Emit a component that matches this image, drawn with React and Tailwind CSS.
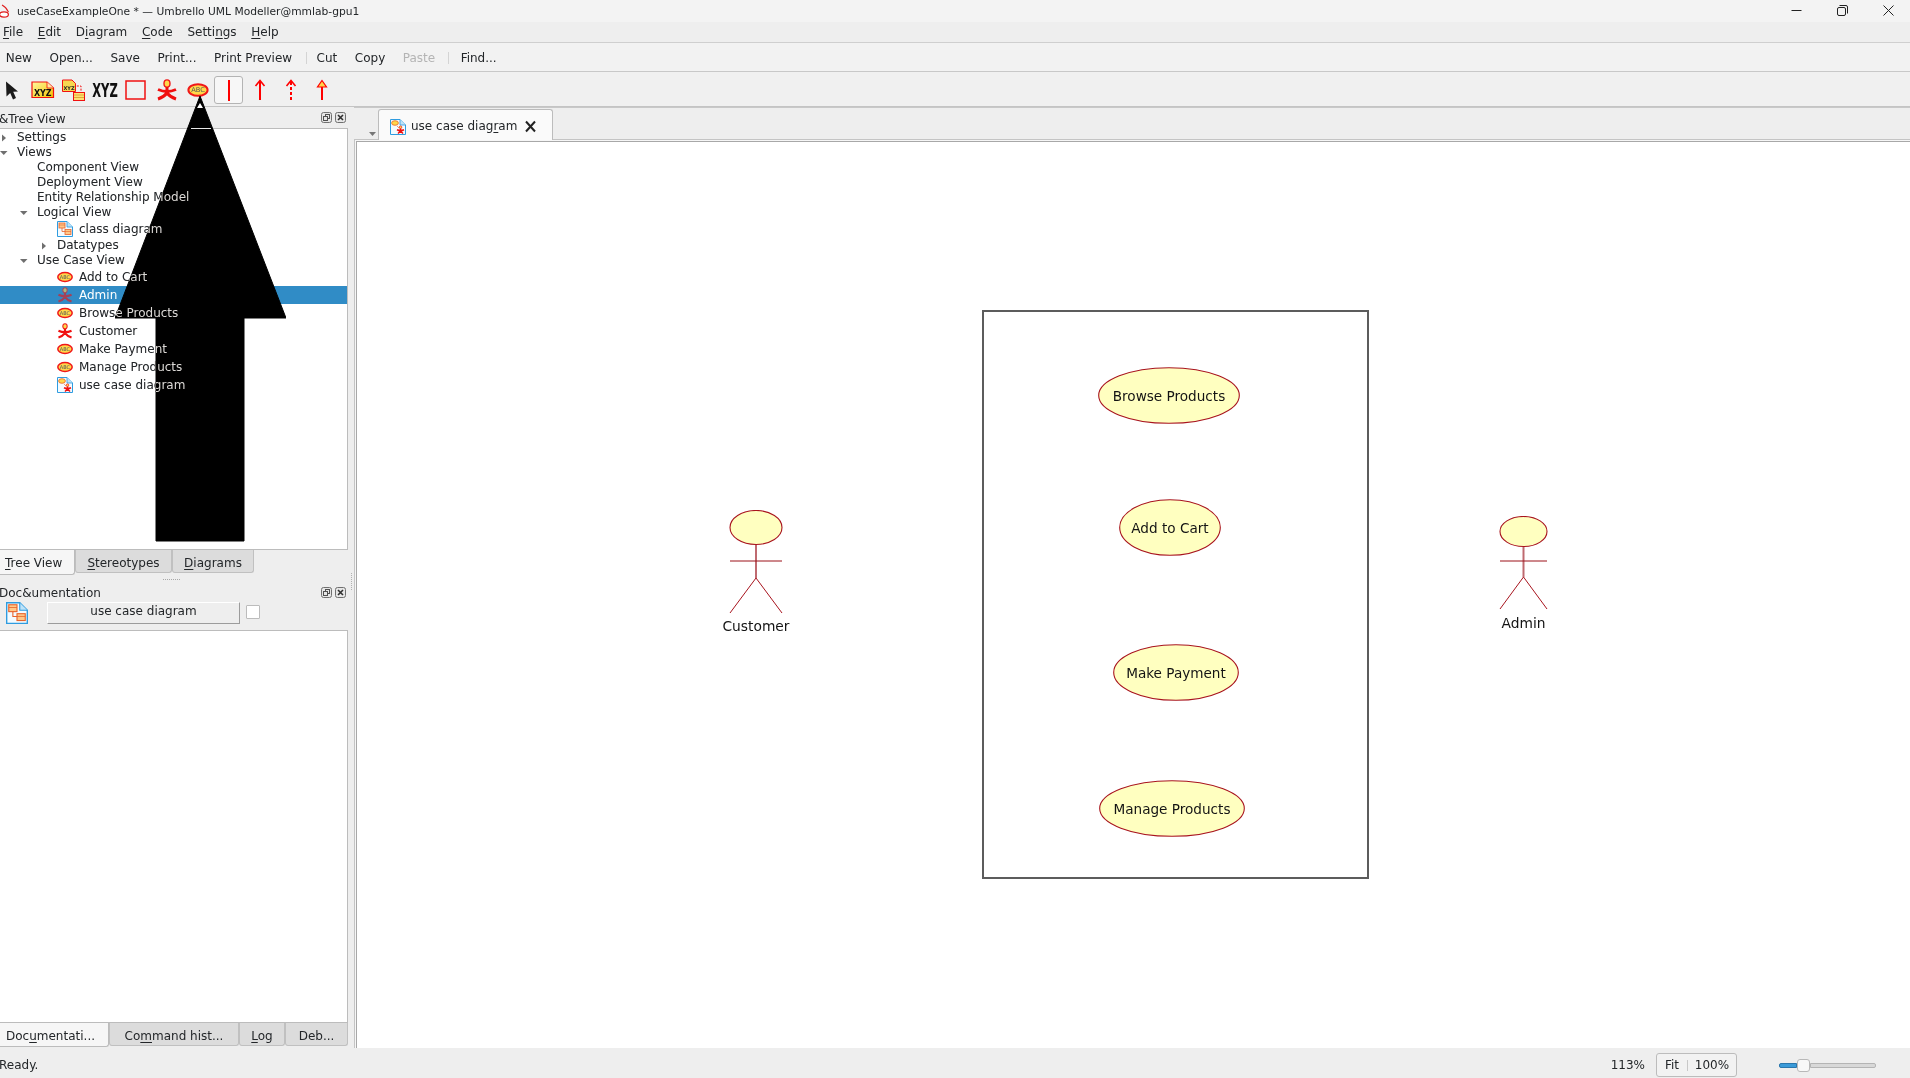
import React from "react";

const FONT = "[font-family:'DejaVu_Sans','Liberation_Sans',sans-serif]";

function Caret({ dir }) {
  return (
    <svg width="8" height="8" viewBox="0 0 8 8" className="shrink-0">
      {dir === "down" ? <path d="M0 2 H7.5 L3.75 6 Z" fill="#6f6f6f" /> : <path d="M2 0.5 L6 4 L2 7.5 Z" fill="#6f6f6f" />}
    </svg>
  );
}

function EllipseIcon({ w = 16, h = 12 }) {
  return (
    <svg width={w} height={h} viewBox="0 0 16 12" className="shrink-0">
      <ellipse cx="8" cy="6" rx="7.2" ry="4.4" fill="#ffd84a" stroke="#f01818" strokeWidth="1.5" />
      <text x="8" y="7.8" textAnchor="middle" fontSize="5" fill="#555" fontFamily="DejaVu Sans">ABC</text>
    </svg>
  );
}

function ActorIcon({ w = 16, h = 16 }) {
  return (
    <svg width={w} height={h} viewBox="0 0 20 22" className="shrink-0">
      <ellipse cx="10" cy="4.5" rx="3" ry="3.6" fill="#ffd84a" stroke="#f01818" strokeWidth="1.4" />
      <path d="M1 10.5 Q10 14.5 19 10.5 M10 8 V14.5 M10 14 Q7 18 1 20 M10 14 Q13 18 19 20" fill="none" stroke="#f01010" strokeWidth="3" />
    </svg>
  );
}

function DocFrame({ size, children }) {
  return (
    <svg width={size} height={size} viewBox="0 0 16 16" className="shrink-0">
      <path d="M0.5 0.5 H10 L15.5 6 V15.5 H0.5 Z" fill="#f4fbff" stroke="#2f9ce0" strokeWidth="1" />
      <path d="M10 0.5 V6 H15.5" fill="#bfe3f8" stroke="#2f9ce0" strokeWidth="0.8" />
      {children}
    </svg>
  );
}

function ClassDiagramIcon({ size = 16 }) {
  return (
    <DocFrame size={size}>
      <rect x="2" y="2" width="6" height="5" fill="#ffc98a" stroke="#e8632a" strokeWidth="0.8" />
      <path d="M2 4 H8" stroke="#e8632a" strokeWidth="0.6" />
      <path d="M5 7 V10.5 H8" fill="none" stroke="#e8632a" strokeWidth="0.8" />
      <rect x="8" y="8.5" width="6" height="5" fill="#ffc98a" stroke="#e8632a" strokeWidth="0.8" />
      <path d="M8 10.5 H14" stroke="#e8632a" strokeWidth="0.6" />
    </DocFrame>
  );
}

function UseCaseDiagramIcon({ size = 16 }) {
  return (
    <DocFrame size={size}>
      <ellipse cx="5" cy="4" rx="3.4" ry="2.3" fill="#ffd84a" stroke="#e8632a" strokeWidth="0.8" />
      <path d="M7 7 L9 9" stroke="#e8632a" strokeWidth="0.6" />
      <circle cx="10.5" cy="8.2" r="1.3" fill="#ffd84a" stroke="#f01818" strokeWidth="0.7" />
      <path d="M7 10.8 Q10.5 12.4 14 10.8 M10.5 9.5 V12 M10.5 12 L8 14.5 M10.5 12 L13 14.5" fill="none" stroke="#f01010" strokeWidth="1.5" />
    </DocFrame>
  );
}

function DockButtons() {
  return (
    <div className="flex gap-[3px]">
      <svg width="11" height="11" viewBox="0 0 11 11">
        <rect x="0.5" y="0.5" width="10" height="10" rx="2" fill="#e6e6e6" stroke="#707070" />
        <rect x="4.5" y="2.5" width="4" height="4" fill="none" stroke="#505050" />
        <rect x="2.5" y="4.5" width="4" height="4" fill="#e6e6e6" stroke="#505050" />
      </svg>
      <svg width="11" height="11" viewBox="0 0 11 11">
        <rect x="0.5" y="0.5" width="10" height="10" rx="2" fill="#e6e6e6" stroke="#707070" />
        <path d="M3 3 L8 8 M8 3 L3 8" stroke="#303030" strokeWidth="1.6" />
      </svg>
    </div>
  );
}

function U({ children }) {
  return <u className="underline underline-offset-2 decoration-1">{children}</u>;
}

const TREE_TEXT = "relative z-20 mix-blend-difference text-[#dcd9d6] whitespace-nowrap";

function PlainRow({ pad, caret, label }) {
  return (
    <div className={`flex h-[15px] items-center ${pad}`}>
      {caret ? <span className="flex w-[17px] shrink-0"><Caret dir={caret} /></span> : null}
      <span className={TREE_TEXT}>{label}</span>
    </div>
  );
}

function IconRow({ icon, label, selected }) {
  return (
    <div className={`flex h-[18px] items-center gap-[6px] pl-[57px] ${selected ? "bg-[#308cc6]" : ""}`}>
      <span className={`flex w-[16px] shrink-0 justify-center ${selected ? "opacity-60" : ""}`}>{icon}</span>
      <span className={selected ? "relative z-20 whitespace-nowrap text-white" : TREE_TEXT}>{label}</span>
    </div>
  );
}

function TreeView() {
  return (
    <div className="h-[421px] overflow-hidden border-t border-r border-[#bcbcbc] bg-white pt-px">
      <PlainRow pad="pl-0" caret="right" label="Settings" />
      <PlainRow pad="pl-0" caret="down" label="Views" />
      <PlainRow pad="pl-[37px]" label="Component View" />
      <PlainRow pad="pl-[37px]" label="Deployment View" />
      <PlainRow pad="pl-[37px]" label="Entity Relationship Model" />
      <PlainRow pad="pl-[20px]" caret="down" label="Logical View" />
      <IconRow icon={<ClassDiagramIcon />} label="class diagram" />
      <PlainRow pad="pl-[40px]" caret="right" label="Datatypes" />
      <PlainRow pad="pl-[20px]" caret="down" label="Use Case View" />
      <IconRow icon={<EllipseIcon />} label="Add to Cart" />
      <IconRow icon={<ActorIcon />} label="Admin" selected />
      <IconRow icon={<EllipseIcon />} label="Browse Products" />
      <IconRow icon={<ActorIcon />} label="Customer" />
      <IconRow icon={<EllipseIcon />} label="Make Payment" />
      <IconRow icon={<EllipseIcon />} label="Manage Products" />
      <IconRow icon={<UseCaseDiagramIcon />} label="use case diagram" />
    </div>
  );
}

function TabActive({ size, children }) {
  return (
    <div className={`flex ${size} items-center rounded-br-[3px] border-r border-b border-[#bcbcbc] bg-[#f6f6f6]`}>{children}</div>
  );
}

function TabIdle({ size, children }) {
  return (
    <div className={`flex ${size} items-center justify-center rounded-b-[3px] border-r border-b border-l border-[#c0c0c0] bg-[#dcdcdc]`}>{children}</div>
  );
}

function ToolBtn({ children, dim }) {
  return <span className={`whitespace-nowrap px-[8.75px] ${dim ? "text-[#b4b4b4]" : ""}`}>{children}</span>;
}

function Slot({ children }) {
  return <div className="flex h-[34px] w-[31px] shrink-0 items-center justify-center">{children}</div>;
}

function UpArrow({ dashed, tri }) {
  return (
    <svg width="14" height="22" viewBox="0 0 14 22">
      <path d="M7 3 V21" stroke="#f00" strokeWidth="2" strokeDasharray={dashed ? "3 2" : undefined} fill="none" />
      {tri ? <path d="M7 1.5 L11.5 8 H2.5 Z" fill="#ffd84a" stroke="#f00" strokeWidth="1.2" /> : <path d="M2.5 7 L7 1.5 L11.5 7" stroke="#f00" strokeWidth="1.6" fill="none" />}
    </svg>
  );
}

function Toolbar2() {
  return (
    <div className="-ml-[4px] flex h-[35px] shrink-0 items-center border-b border-[#c4c4c4] bg-[#f0f0f0] pt-[2px]">
      <Slot>
        <svg width="14" height="19" viewBox="0 0 14 19"><path d="M1 0.5 L13 10.5 L8.2 10.8 L11 17 L8 18.5 L5.2 12 L1.5 15.5 Z" fill="#1a1a1a" /></svg>
      </Slot>
      <Slot>
        <svg width="24" height="18" viewBox="0 0 24 18">
          <defs><linearGradient id="ng" x1="0" y1="0" x2="1" y2="1"><stop offset="0" stopColor="#fff8a0" /><stop offset="1" stopColor="#f4c400" /></linearGradient></defs>
          <path d="M1 1 H16 L22.5 7 V16.5 H1 Z" fill="url(#ng)" stroke="#f01010" strokeWidth="1.2" />
          <path d="M16 1 V7 H22.5" fill="#ffe9a0" stroke="#f01010" strokeWidth="0.8" />
          <text x="11.8" y="14.6" textAnchor="middle" fontSize="8" fontWeight="700" fill="#111" fontFamily="DejaVu Sans">XYZ</text>
        </svg>
      </Slot>
      <Slot>
        <svg width="24" height="22" viewBox="0 0 24 22">
          <path d="M8 7 H19 V13" fill="none" stroke="#f01010" strokeWidth="1" strokeDasharray="2 1.4" />
          <path d="M0.5 1 H10 L13.5 4.5 V12.5 H0.5 Z" fill="#f6d850" stroke="#f01010" strokeWidth="1" />
          <text x="7" y="10.5" textAnchor="middle" fontSize="5" fontWeight="700" fill="#222" fontFamily="DejaVu Sans">XYZ</text>
          <rect x="11.5" y="13.5" width="11" height="8" fill="#ffe070" stroke="#f01010" strokeWidth="1" />
          <path d="M12 16 H22 M12 18.5 H22" stroke="#d09020" strokeWidth="0.7" />
        </svg>
      </Slot>
      <Slot>
        <svg width="26" height="26" viewBox="0 0 26 26">
          <text transform="translate(13 20) scale(0.64 1)" textAnchor="middle" fontSize="20" fontWeight="700" fill="#111" fontFamily="DejaVu Sans Condensed, DejaVu Sans">XYZ</text>
        </svg>
      </Slot>
      <Slot>
        <svg width="21" height="20" viewBox="0 0 21 20"><rect x="1" y="1" width="19" height="18" fill="none" stroke="#f01010" strokeWidth="1.5" /></svg>
      </Slot>
      <Slot><ActorIcon w={20} h={22} /></Slot>
      <Slot><EllipseIcon w={22} h={16} /></Slot>
      <Slot>
        <div className="flex h-[28px] w-[29px] items-center justify-center rounded-[3px] border border-[#b4b4b4] bg-[#f7f7f7]">
          <div className="h-[21px] w-[2px] bg-[#f00]" />
        </div>
      </Slot>
      <Slot><UpArrow /></Slot>
      <Slot><UpArrow dashed /></Slot>
      <Slot><UpArrow tri /></Slot>
    </div>
  );
}

function UseCase({ pos, w, h, label }) {
  return (
    <div className={`absolute ${pos} flex items-center justify-center pt-[2px]`}>
      <svg width={w} height={h} viewBox={`0 0 ${w} ${h}`} className="absolute inset-0">
        <ellipse cx={w / 2} cy={h / 2} rx={w / 2 - 0.7} ry={h / 2 - 0.7} fill="#ffffc0" stroke="#a8141e" strokeWidth="1.1" />
      </svg>
      <span className="relative whitespace-nowrap text-[13.6px] text-[#141414]">{label}</span>
    </div>
  );
}

function Actor({ pos, w, headH, hip, arm, h, label, gap }) {
  const cx = w / 2;
  const neck = headH + 1;
  return (
    <div className={`absolute ${pos} flex flex-col items-center`}>
      <svg width={w + 2} height={h + 2} viewBox={`-1 0 ${w + 2} ${h + 2}`} className="block shrink-0">
        <path d={`M${cx} ${neck} V${hip}`} stroke="#bf6a70" strokeWidth="2" fill="none" />
        <path d={`M0 ${arm} H${w}`} stroke="#9c1018" strokeWidth="1" fill="none" />
        <path d={`M0 ${h} L${cx} ${hip} L${w} ${h}`} stroke="#a8141e" strokeWidth="1" fill="none" />
        <ellipse cx={cx} cy={headH / 2 + 0.5} rx={cx} ry={headH / 2} fill="#ffffc0" stroke="#a8141e" strokeWidth="1.1" />
      </svg>
      <span className={`${gap} whitespace-nowrap text-[13.8px] leading-[16px] text-[#141414]`}>{label}</span>
    </div>
  );
}

export default function App() {
  return (
    <div className={`relative flex h-[1078px] w-[1910px] flex-col overflow-hidden bg-[#eeeeee] text-[12px] leading-[15px] text-[#232629] ${FONT}`}>
      {/* Title bar */}
      <div className="flex h-[22px] shrink-0 items-center bg-[#f3f3f3]">
        <svg width="13" height="14" viewBox="0 0 13 14" className="-ml-px shrink-0">
          <ellipse cx="5" cy="10.5" rx="4.4" ry="2.6" fill="#fff" stroke="#e02020" strokeWidth="1.2" />
          <path d="M3 1 Q7 3 9.5 8" fill="none" stroke="#e02020" strokeWidth="1.1" />
        </svg>
        <span className="ml-[5px] whitespace-nowrap text-[10.7px]">useCaseExampleOne * — Umbrello UML Modeller@mmlab-gpu1</span>
        <div className="ml-auto flex items-center gap-[35px] pb-[2px] pr-[16px]">
          <svg width="11" height="11" viewBox="0 0 11 11"><path d="M0.5 5.5 H10.5" stroke="#222" strokeWidth="1" /></svg>
          <svg width="11" height="11" viewBox="0 0 11 11"><rect x="0.5" y="2.5" width="8" height="8" rx="1.5" fill="none" stroke="#222" /><path d="M2.5 0.5 H9 Q10.5 0.5 10.5 2 V8.5" fill="none" stroke="#222" /></svg>
          <svg width="11" height="11" viewBox="0 0 11 11"><path d="M0.5 0.5 L10.5 10.5 M10.5 0.5 L0.5 10.5" stroke="#222" strokeWidth="1" /></svg>
        </div>
      </div>

      {/* Menu bar */}
      <div className="flex h-[21px] shrink-0 items-center gap-[14.7px] border-b border-[#cfcfcf] pl-[3px]">
        <span><U>F</U>ile</span>
        <span><U>E</U>dit</span>
        <span>D<U>i</U>agram</span>
        <span><U>C</U>ode</span>
        <span>Setti<U>n</U>gs</span>
        <span><U>H</U>elp</span>
      </div>

      {/* Main toolbar */}
      <div className="flex h-[29px] shrink-0 items-center border-b border-[#c8c8c8] bg-[#f2f2f2] pt-[2px]">
        <div className="-ml-[3px] flex items-center">
          <ToolBtn>New</ToolBtn>
          <ToolBtn>Open...</ToolBtn>
          <ToolBtn>Save</ToolBtn>
          <ToolBtn>Print...</ToolBtn>
          <ToolBtn>Print Preview</ToolBtn>
          <div className="ml-[5px] mr-px h-[12px] w-px bg-[#d4d4d4]" />
          <ToolBtn>Cut</ToolBtn>
          <ToolBtn>Copy</ToolBtn>
          <ToolBtn dim>Paste</ToolBtn>
          <div className="ml-[4px] mr-[3px] h-[12px] w-px bg-[#d4d4d4]" />
          <ToolBtn>Find...</ToolBtn>
        </div>
      </div>

      <Toolbar2 />

      {/* Body */}
      <div className="flex min-h-0 flex-1">
        {/* Left docks */}
        <div className="flex w-[348px] shrink-0 flex-col">
          <div className="flex h-[21px] shrink-0 items-center justify-between pr-[2px]">
            <span className="-ml-[1px] mt-[3px]">&amp;Tree View</span>
            <DockButtons />
          </div>
          <TreeView />
          <div className="flex h-[26px] shrink-0 items-start border-t border-[#bcbcbc]">
            <TabActive size="h-[25px] w-[75px] pl-[5px] pt-[2px]"><span><U>T</U>ree View</span></TabActive>
            <TabIdle size="h-[23px] w-[97px] pt-[4px]"><span><U>S</U>tereotypes</span></TabIdle>
            <TabIdle size="h-[23px] w-[82px] pt-[4px]"><span><U>D</U>iagrams</span></TabIdle>
          </div>
          <div className="flex h-[9px] shrink-0 items-center pl-[163px]">
            <div className="h-px w-[17px] border-t border-dotted border-[#a8a8a8]" />
          </div>
          <div className="flex h-[17px] shrink-0 items-center justify-between pr-[2px]">
            <span className="-ml-[1px] mt-[2px]">Doc&amp;umentation</span>
            <DockButtons />
          </div>
          <div className="flex h-[29px] shrink-0 items-start pl-[6px] pt-px">
            <ClassDiagramIcon size={22} />
            <div className="ml-[19px] flex h-[22px] w-[193px] items-center justify-center border-t border-l border-r border-b border-t-white border-l-white border-r-[#9c9c9c] border-b-[#9c9c9c] bg-[#eeeeee] pb-[3px]">use case diagram</div>
            <div className="ml-[6px] mt-[3px] h-[14px] w-[14px] rounded-[1px] border border-[#bcbcbc] bg-white" />
          </div>
          <div className="min-h-0 flex-1 border-t border-r border-b border-[#bcbcbc] bg-white" />
          <div className="flex h-[25px] shrink-0 items-start">
            <TabActive size="h-[24px] w-[109px] pl-[6px] pt-[4px]"><span>Doc<U>u</U>mentati...</span></TabActive>
            <TabIdle size="h-[23px] w-[130px] pt-[4px]"><span>Co<U>m</U>mand hist...</span></TabIdle>
            <TabIdle size="h-[23px] w-[46px] pt-[4px]"><span><U>L</U>og</span></TabIdle>
            <TabIdle size="h-[23px] w-[63px] pt-[4px]"><span>Deb...</span></TabIdle>
          </div>
        </div>

        {/* Splitter */}
        <div className="flex w-[6px] shrink-0 items-start justify-center pt-[466px]">
          <div className="h-[17px] w-px border-l border-dotted border-[#b0b0b0]" />
        </div>

        {/* Diagram area */}
        <div className="flex min-w-0 flex-1 flex-col border-t border-[#c8c8c8]">
          <div className="flex h-[31px] shrink-0 items-end">
            <div className="flex h-[28px] w-[24px] items-center justify-end pr-[2px] pt-[17px]">
              <svg width="7" height="4" viewBox="0 0 7 4"><path d="M0 0 H7 L3.5 4 Z" fill="#777" /></svg>
            </div>
            <div className="relative top-px flex h-[31px] w-[175px] items-center rounded-t-[3px] border-t border-r border-l border-[#bcbcbc] bg-[#fafafa] pl-[11px] pt-[3px]">
              <UseCaseDiagramIcon size={16} />
              <span className="ml-[5px] whitespace-nowrap">use case diag<U>r</U>am</span>
              <svg width="13" height="13" viewBox="0 0 13 13" className="ml-[7px]"><path d="M2 1.5 L11 11.5 M11 1.5 L2 11.5" stroke="#222" strokeWidth="2" /></svg>
            </div>
          </div>
          <div className="min-h-0 flex-1 border-t border-l border-[#c4c4c4] bg-[#f6f6f6] pl-px pt-px">
            <div className="relative h-full border-t border-l border-[#a8a8a8] bg-white">
              <div className="absolute left-[625px] top-[168px] h-[569px] w-[387px] border-2 border-[#5c5c5c]" />
              <UseCase pos="left-[741px] top-[225px] h-[57px] w-[142px]" w={142} h={57} label="Browse Products" />
              <UseCase pos="left-[762px] top-[357px] h-[57px] w-[102px]" w={102} h={57} label="Add to Cart" />
              <UseCase pos="left-[756px] top-[502px] h-[57px] w-[126px]" w={126} h={57} label="Make Payment" />
              <UseCase pos="left-[742px] top-[638px] h-[57px] w-[146px]" w={146} h={57} label="Manage Products" />
              <Actor pos="left-[372px] top-[368px] w-[54px]" w={52} headH={34} hip={68} arm={51} h={103} label="Customer" gap="mt-[3px]" />
              <Actor pos="left-[1142px] top-[374px] w-[49px]" w={47} headH={30} hip={61} arm={45} h={93} label="Admin" gap="mt-[4px]" />
            </div>
          </div>
        </div>
      </div>

      {/* Status bar */}
      <div className="flex h-[30px] shrink-0 items-center pt-[4px]">
        <span className="-ml-[1px]">Ready.</span>
        <div className="ml-auto flex items-center pr-[34px]">
          <span className="whitespace-nowrap">113%</span>
          <div className="ml-[11px] flex h-[24px] w-[81px] items-center rounded-[3px] border border-[#bcbcbc] bg-[#f2f2f2]">
            <span className="w-[30px] text-center">Fit</span>
            <div className="h-[11px] w-px bg-[#c8c8c8]" />
            <span className="flex-1 text-center">100%</span>
          </div>
          <div className="ml-[42px] flex h-[14px] w-[97px] items-center">
            <div className="h-[5px] w-[18px] rounded-l-[2px] border border-[#2a76ac] bg-[#3a9ad8]" />
            <div className="relative z-10 h-[13px] w-[13px] shrink-0 rounded-[3px] border border-[#b8b8b8] bg-[#f8f8f8]" />
            <div className="h-[5px] flex-1 rounded-r-[2px] border border-[#b4b4b4] bg-[#d8d8d8]" />
          </div>
        </div>
      </div>

      {/* Annotation arrow lying over the window */}
      <svg width="171" height="446" viewBox="115 96 171 446" className="absolute left-[115px] top-[96px] z-10">
        <path d="M200 96 L286 318 H244 V541 H156 V318 H115 Z" fill="#000" stroke="#000" strokeLinejoin="round" />
        <path d="M200 103 L203 108 H197 Z" fill="#fff" />
        <path d="M191 128.5 H211" stroke="#e8e8e8" strokeWidth="1" />
      </svg>
    </div>
  );
}
